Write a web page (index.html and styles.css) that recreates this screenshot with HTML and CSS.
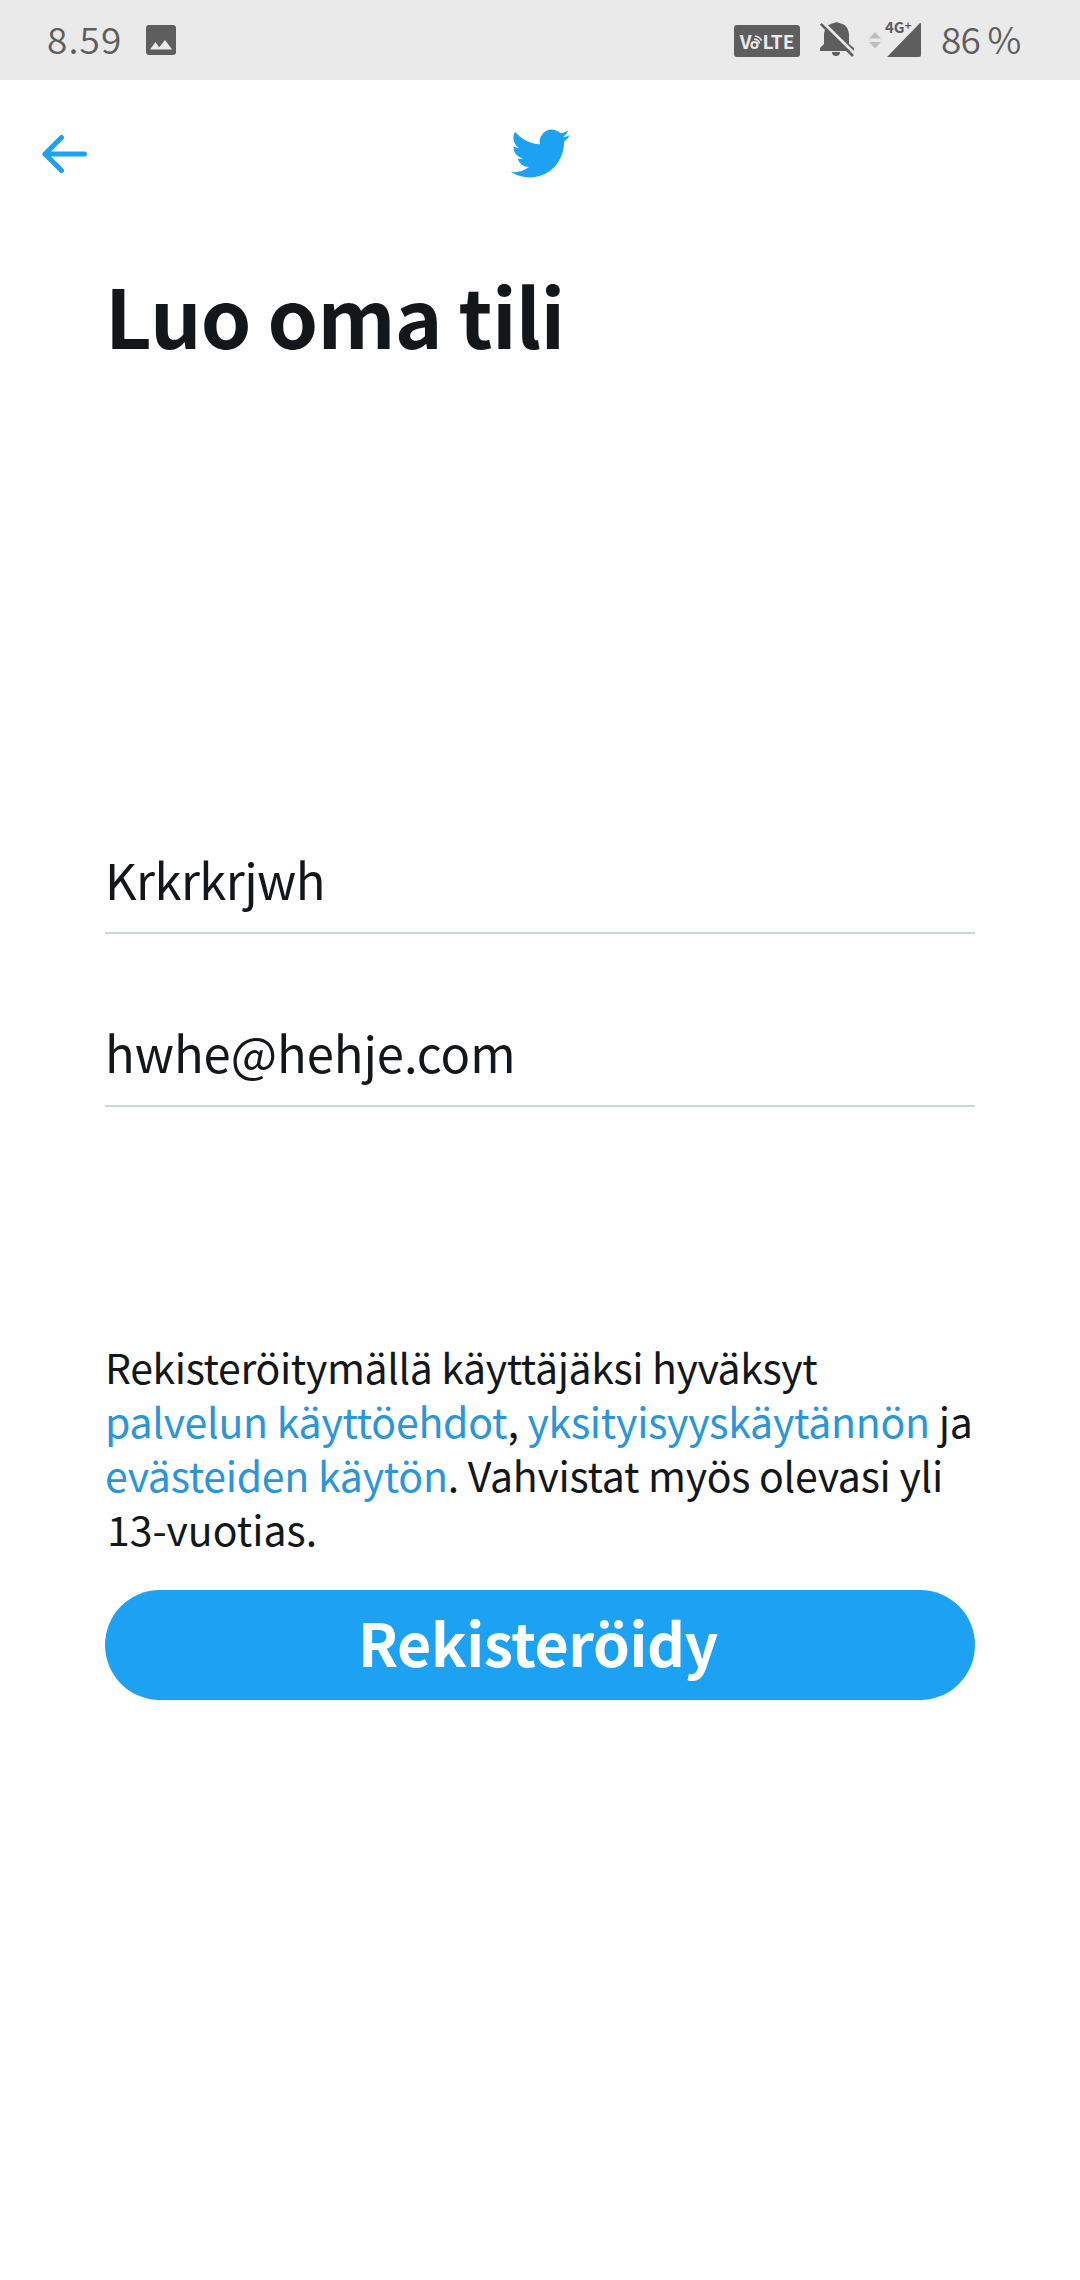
FILE: index.html
```
<!DOCTYPE html>
<html lang="fi">
<head>
<meta charset="utf-8">
<title>Luo oma tili</title>
<link rel="stylesheet" href="styles.css">
</head>
<body>
<div class="screen">
  <div class="status-bar">
    <div class="status-left">
      <span class="clock">8.59</span>
      <svg class="icon-image" viewBox="0 0 30 30"><path fill="#5e5e5e" fill-rule="evenodd" d="M3 0h24a3 3 0 0 1 3 3v24a3 3 0 0 1-3 3H3a3 3 0 0 1-3-3V3a3 3 0 0 1 3-3zM4 24.500h22.200L19 15l-5.800 7.300L9.500 17z"/></svg>
    </div>
    <div class="status-right">
      <div class="volte">V<svg class="volte-o" viewBox="0 0 12 17"><g fill="none" stroke="#eaeaea"><circle cx="4.500" cy="12" r="3" stroke-width="2.200"/><path stroke-width="1.600" d="M4 6.300a5.500 5.500 0 0 1 5.600 4.200M5 3.200a7.500 7.500 0 0 1 6.500 4.400"/></g></svg>LTE</div>
      <svg class="icon-bell" viewBox="0 0 36 36"><path fill="#5e5e5e" d="M1 29v-3l4-4V13C5 6.500 9.500 1.500 15 1c1-1 4-1 5 0 6 .5 10 5.500 10 12v9l5 4v3zM13 30h8a4 4 0 0 1-8 0z"/><path stroke="#eaeaea" stroke-width="3" d="M4 0.500L36 32"/><path stroke="#5e5e5e" stroke-width="2.600" d="M1.800 1.800L34 34"/></svg>
      <svg class="icon-data" viewBox="0 0 12 18"><path fill="#bdbdbd" d="M0 7.500L6 1l6 6.500zM0 11h12l-6 6.500z"/></svg>
      <div class="signal">
        <svg class="signal-shape" viewBox="0 0 36 36"><path fill="#5e5e5e" d="M1 35L33.500 1.500Q35 .5 35 2V33q0 2-2 2z"/></svg>
        <span class="signal-label">4G<span class="plus">+</span></span>
      </div>
      <span class="battery">86 %</span>
    </div>
  </div>

  <div class="top-bar">
    <svg class="icon-back" viewBox="0 0 48 40"><path fill="none" stroke="#1da1f2" stroke-width="5" stroke-linecap="round" stroke-linejoin="round" d="M21.500 3.500L5 20 21.500 36.500M5 20H44.500"/></svg>
    <svg class="logo" viewBox="0 0 24 24"><path fill="#1da1f2" d="M23.953 4.570a10 10 0 01-2.825.775 4.958 4.958 0 002.163-2.723c-.951.555-2.005.959-3.127 1.184a4.920 4.920 0 00-8.384 4.482C7.690 8.095 4.067 6.130 1.640 3.162a4.822 4.822 0 00-.666 2.475c0 1.710.870 3.213 2.188 4.096a4.904 4.904 0 01-2.228-.616v.060a4.923 4.923 0 003.946 4.827 4.996 4.996 0 01-2.212.085 4.936 4.936 0 004.604 3.417 9.867 9.867 0 01-6.102 2.105c-.390 0-.779-.023-1.170-.067a13.995 13.995 0 007.557 2.209c9.053 0 13.998-7.496 13.998-13.985 0-.210 0-.420-.015-.630A9.935 9.935 0 0024 4.590z"/></svg>
  </div>

  <main class="content">
    <h1 class="title">Luo oma tili</h1>
    <div class="fields">
      <div class="field name">Krkrkrjwh</div>
      <div class="field email">hwhe@hehje.com</div>
    </div>
    <p class="terms"><span class="intro">Rekisteröitymällä käyttäjäksi hyväksyt</span><br><a class="link">palvelun käyttöehdot</a>, <a class="link">yksityisyyskäytännön</a> ja<br><a class="link">evästeiden käytön</a>. Vahvistat myös olevasi yli<br><span class="age">13-vuotias.</span></p>
    <div class="button">Rekisteröidy</div>
  </main>
</div>
</body>
</html>
```
FILE: styles.css
```
* { box-sizing: border-box; }

body {
  margin: 0;
  background: #fefefe;
  color: #14171a;
  font-family: "Noto Sans CJK JP", "Noto Sans", sans-serif;
}

svg { display: block; flex: none; }

.screen { width: 1080px; height: 2280px; }

.status-bar {
  display: flex;
  justify-content: space-between;
  height: 80px;
  padding: 0 60px 0 47px;
  background: #eaeaea;
  color: #5e5e5e;
}

.status-left, .status-right { display: flex; align-items: center; }

.clock, .battery {
  font-size: 37px;
  font-weight: 350;
  line-height: 76px;
  height: 80px;
  white-space: nowrap;
}

.clock { width: 99px; letter-spacing: 1.100px; }
.battery { width: 79px; margin-left: 19px; letter-spacing: -0.800px; }

.icon-image { width: 30px; height: 30px; }

.volte {
  display: flex;
  align-items: center;
  justify-content: center;
  width: 66px;
  height: 32px;
  margin-top: 2px;
  border-radius: 3px;
  background: #5e5e5e;
  color: #eaeaea;
  font-size: 19px;
  font-weight: 700;
  line-height: 32px;
}

.volte-o { width: 12px; height: 17px; margin: 0 0 0 -1px; }
.icon-bell { width: 36px; height: 36px; margin-left: 19px; }
.icon-data { width: 12px; height: 18px; margin-left: 14px; }

.signal { position: relative; margin-left: 5px; }
.signal-shape { width: 36px; height: 36px; }

.signal-label {
  position: absolute;
  left: -1px;
  top: -4px;
  font-size: 15px;
  font-weight: 700;
  line-height: 18px;
  white-space: nowrap;
}

.plus { position: relative; top: -3px; font-size: 12px; }

.top-bar {
  display: grid;
  grid-template-columns: 1fr 60px 1fr;
  align-items: center;
  height: 147px;
  padding: 0 40px;
}

.icon-back { width: 48px; height: 40px; }
.logo { width: 59px; height: 59px; margin-left: 1px; }

.content { padding: 36px 105px 0; }

.title {
  margin: 0;
  font-size: 81px;
  font-weight: 700;
  line-height: 102px;
  letter-spacing: -0.800px;
  word-spacing: -0.800px;
}

.fields { display: grid; gap: 83px; margin-top: 479px; }

.field {
  height: 90px;
  border-bottom: 2px solid #ccd6dd;
  font-size: 49px;
  line-height: 70px;
}

.name { letter-spacing: -0.600px; }
.email { letter-spacing: -0.060px; }

.terms {
  margin: 232px 0 0;
  font-size: 41px;
  line-height: 54px;
  letter-spacing: -0.270px;
  white-space: nowrap;
}

.intro { letter-spacing: -0.380px; }
.link { color: #2b95d9; }
.age { padding-left: 2px; letter-spacing: 0; }

.button {
  display: flex;
  align-items: center;
  justify-content: center;
  height: 110px;
  margin-top: 35px;
  padding: 0 4px 6px 0;
  border-radius: 55px;
  background: #1da1f2;
  color: #fff;
  font-size: 59px;
  font-weight: 700;
  line-height: 80px;
  letter-spacing: -0.400px;
}
```
